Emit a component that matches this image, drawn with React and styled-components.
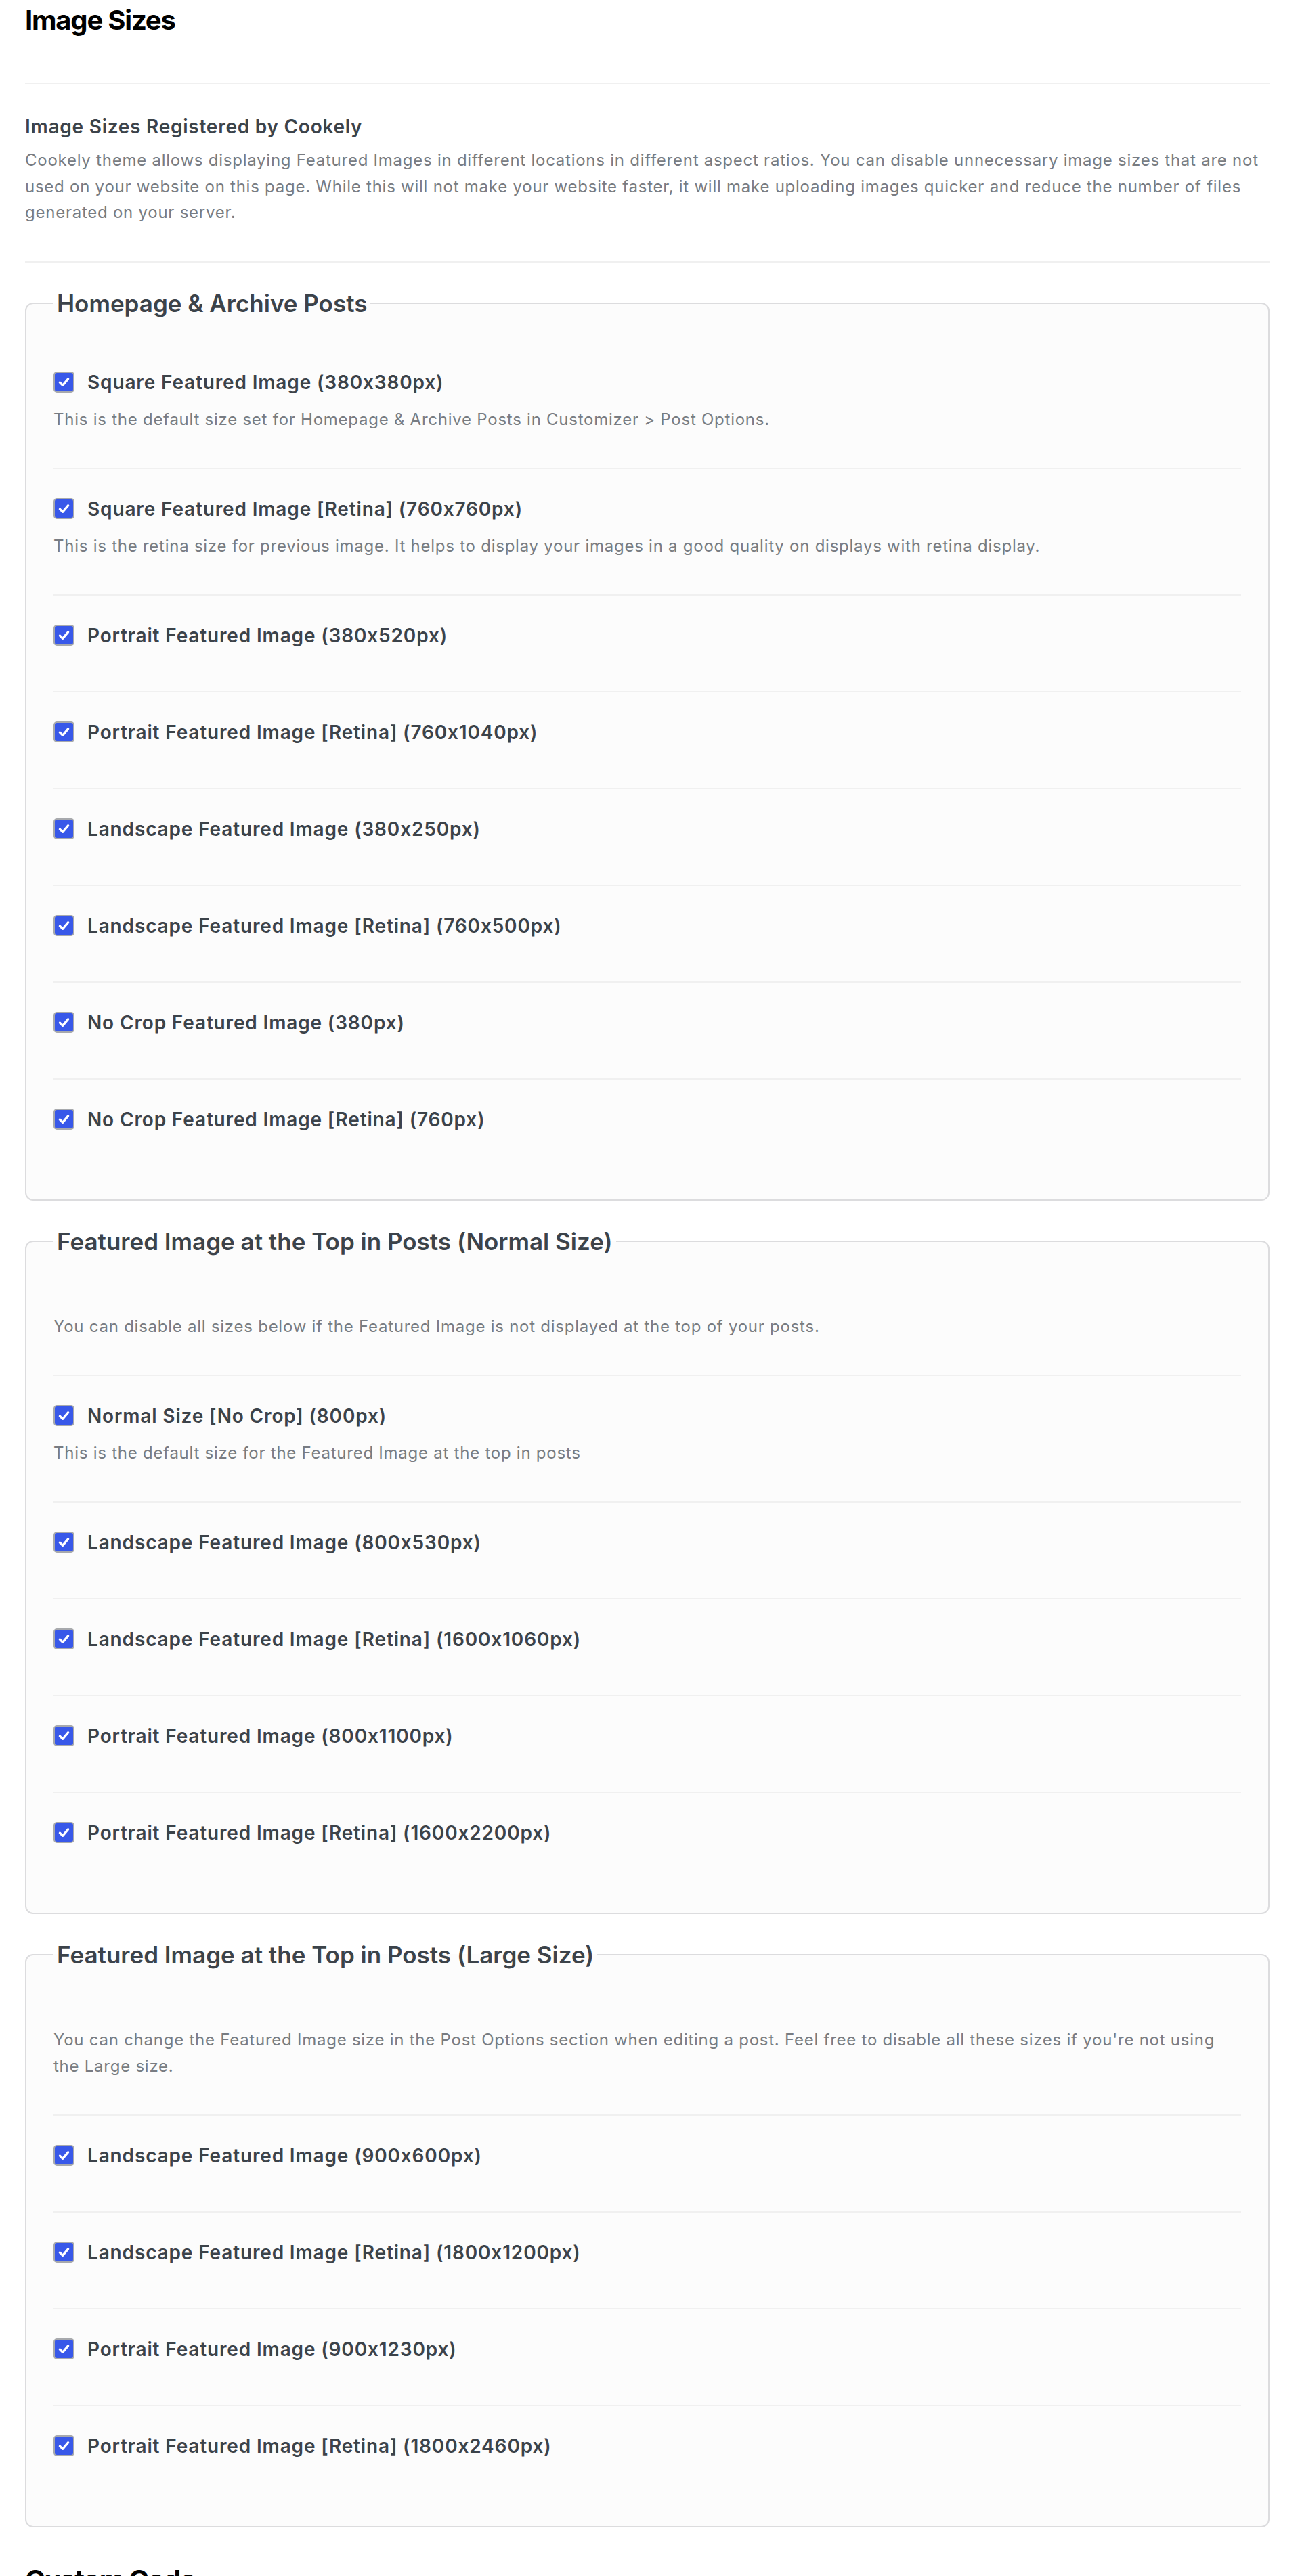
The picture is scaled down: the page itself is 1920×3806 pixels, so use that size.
import React from 'react';
import styled, { createGlobalStyle } from 'styled-components';

const GlobalStyle = createGlobalStyle`
    html, body {
        margin: 0;
        padding: 0;
        background: #fff;
    }
    body {
        font-family: Inter, "Noto Sans", "Liberation Sans", sans-serif;
        font-feature-settings: "calt" 0;
        -webkit-font-smoothing: antialiased;
    }
`;

const groups = [
    {
        title: 'Homepage & Archive Posts',
        rows: [
            { label: 'Square Featured Image (380x380px)', desc: 'This is the default size set for Homepage & Archive Posts in Customizer > Post Options.' },
            { label: 'Square Featured Image [Retina] (760x760px)', desc: 'This is the retina size for previous image. It helps to display your images in a good quality on displays with retina display.' },
            { label: 'Portrait Featured Image (380x520px)' },
            { label: 'Portrait Featured Image [Retina] (760x1040px)' },
            { label: 'Landscape Featured Image (380x250px)' },
            { label: 'Landscape Featured Image [Retina] (760x500px)' },
            { label: 'No Crop Featured Image (380px)' },
            { label: 'No Crop Featured Image [Retina] (760px)' },
        ],
    },
    {
        title: 'Featured Image at the Top in Posts (Normal Size)',
        intro: 'You can disable all sizes below if the Featured Image is not displayed at the top of your posts.',
        rows: [
            { label: 'Normal Size [No Crop] (800px)', desc: 'This is the default size for the Featured Image at the top in posts' },
            { label: 'Landscape Featured Image (800x530px)' },
            { label: 'Landscape Featured Image [Retina] (1600x1060px)' },
            { label: 'Portrait Featured Image (800x1100px)' },
            { label: 'Portrait Featured Image [Retina] (1600x2200px)' },
        ],
    },
    {
        title: 'Featured Image at the Top in Posts (Large Size)',
        intro: "You can change the Featured Image size in the Post Options section when editing a post. Feel free to disable all these sizes if you're not using the Large size.",
        rows: [
            { label: 'Landscape Featured Image (900x600px)' },
            { label: 'Landscape Featured Image [Retina] (1800x1200px)' },
            { label: 'Portrait Featured Image (900x1230px)' },
            { label: 'Portrait Featured Image [Retina] (1800x2460px)' },
        ],
    },
];

const CheckIcon = () => (
    <svg width="21" height="21" viewBox="0 0 20 20" fill="none">
        <path d="M4.2 10.6 L8.2 14.6 L15.8 5.6" stroke="#fff" strokeWidth="3.2" strokeLinecap="round" strokeLinejoin="round" />
    </svg>
);

const App = () => {
    return (
        <Page>
            <GlobalStyle />
            <Title>Image Sizes</Title>
            <Rule $top={68} />
            <SubTitle>Image Sizes Registered by Cookely</SubTitle>
            <Lead>
                Cookely theme allows displaying Featured Images in different locations in different aspect ratios. You can disable unnecessary image sizes that are not used on your website on this page. While this will not make your website faster, it will make uploading images quicker and reduce the number of files generated on your server.
            </Lead>
            <Rule $top={52} />
            {groups.map((group) => (
                <Group key={group.title}>
                    <Legend>{group.title}</Legend>
                    {group.intro && (
                        <IntroRow>
                            <Desc $flush>{group.intro}</Desc>
                        </IntroRow>
                    )}
                    {group.rows.map((row) => (
                        <Row key={row.label}>
                            <Head>
                                <Box><CheckIcon /></Box>
                                <Label>{row.label}</Label>
                            </Head>
                            {row.desc && <Desc>{row.desc}</Desc>}
                        </Row>
                    ))}
                </Group>
            ))}
            <Title $top={54}>Custom Code</Title>
        </Page>
    );
};

const Page = styled.div`
    padding: 6px 45px 40px 37px;
`;

const Title = styled.h2`
    margin: ${(p) => p.$top || 0}px 0 0;
    font-size: 40px;
    line-height: 48px;
    font-weight: 700;
    letter-spacing: -1.2px;
    color: #000;
`;

const Rule = styled.div`
    height: 2px;
    background: #f0f0f0;
    margin-top: ${(p) => p.$top}px;
`;

const SubTitle = styled.h3`
    margin: 43px 0 0;
    font-size: 28px;
    line-height: 40px;
    font-weight: 600;
    letter-spacing: 0.75px;
    color: #3c434a;
`;

const Lead = styled.p`
    margin: 11px 0 0;
    font-size: 24px;
    line-height: 38.5px;
    letter-spacing: 0.75px;
    color: #787c82;
`;

const Group = styled.fieldset`
    margin: 39px 0 0;
    padding: 37px 40px 36px;
    min-width: 0;
    border: 2px solid #dcdcde;
    border-radius: 12px;
    background: #fcfcfc;
`;

const Legend = styled.legend`
    padding: 0 5px;
    font-size: 35px;
    line-height: 42px;
    font-weight: 600;
    color: #3c434a;
`;

const IntroRow = styled.div`
    padding: 48px 0 52px;
`;

const Row = styled.div`
    padding: 39px 0 52px;
    ${IntroRow} + &, & + & {
        border-top: 2px solid #f0f0f0;
    }
`;

const Head = styled.div`
    display: flex;
    align-items: center;
    gap: 19px;
    height: 40px;
    margin-bottom: 10px;
`;

const Box = styled.span`
    flex-shrink: 0;
    box-sizing: border-box;
    width: 31px;
    height: 31px;
    border: 2px solid #a7a9ad;
    border-radius: 5px;
    background: #3858e9;
    display: flex;
    align-items: center;
    justify-content: center;
`;

const Label = styled.span`
    font-size: 28px;
    line-height: 40px;
    font-weight: 600;
    letter-spacing: 0.85px;
    color: #3c434a;
`;

/* margin-top collapses with Head's margin-bottom, so 15px is the real gap */
const Desc = styled.p`
    margin: ${(p) => (p.$flush ? 0 : 15)}px 0 0;
    font-size: 24px;
    line-height: 39px;
    letter-spacing: 0.75px;
    color: #787c82;
`;

export default App;
